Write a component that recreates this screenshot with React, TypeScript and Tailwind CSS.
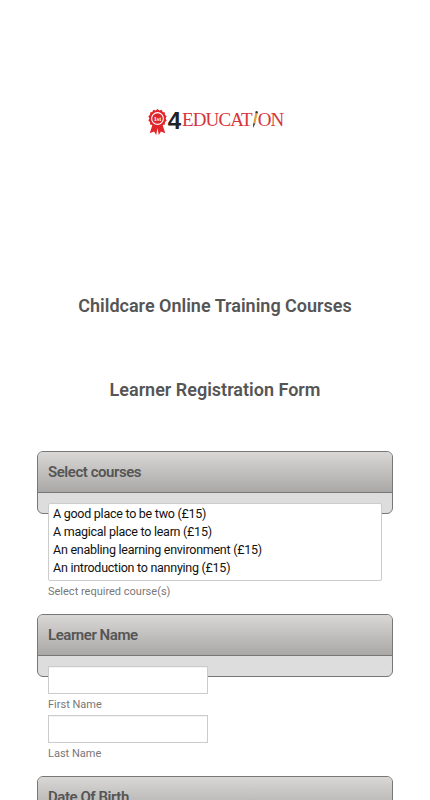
import React from 'react';

const COURSES = [
	'A good place to be two (£15)',
	'A magical place to learn (£15)',
	'An enabling learning environment (£15)',
	'An introduction to nannying (£15)',
];

// Rosette with ribbon tails
const Medal = () => (
	<svg width="19" height="26" viewBox="0 0 22 30" preserveAspectRatio="none" className="shrink-0">
		<path d="M6 16 L2 28 L7 26 L9.5 30 L11 22 L12.5 30 L15 26 L20 28 L16 16 Z" fill="#e0262b" />
		<path
			d="M11 0 L13.2 1.6 L15.8 1 L17 3.4 L19.6 4 L19.6 6.7 L21.6 8.5 L20.4 11 L21.6 13.4 L19.6 15.2 L19.6 17.9 L17 18.5 L15.8 20.9 L13.2 20.3 L11 21.9 L8.8 20.3 L6.2 20.9 L5 18.5 L2.4 17.9 L2.4 15.2 L0.4 13.4 L1.6 11 L0.4 8.5 L2.4 6.7 L2.4 4 L5 3.4 L6.2 1 L8.8 1.6 Z"
			fill="#e0262b"
		/>
		<circle cx="11" cy="11" r="6.8" fill="#e0262b" stroke="#ffffff" strokeWidth="1.3" />
		<text x="11" y="13.5" textAnchor="middle" fontSize="7" fontFamily="Liberation Serif, serif" fontWeight="700" fill="#ffffff">
			1st
		</text>
	</svg>
);

const Pencil = () => (
	<svg width="6" height="17" viewBox="0 0 6 17" className="shrink-0">
		<path d="M3.6 0.5 L5.8 1 L3.4 12.6 L1.2 12.2 Z" fill="#d9a441" />
		<path d="M3.8 0 L5.9 0.4 L5.5 2.4 L3.4 2 Z" fill="#333333" />
		<path d="M1.2 12.2 L3.4 12.6 L1 17 Z" fill="#3a3a3a" />
	</svg>
);

const Logo = () => (
	<div className="flex items-start justify-center h-[26px] pl-[1px]">
		<Medal />
		<span className="font-['Liberation_Sans',sans-serif] font-bold text-[24px] leading-[17px] mt-[3px] text-[#222222] ml-[1px]">4</span>
		<span className="font-['Liberation_Serif',serif] text-[19px] tracking-[-0.9px] leading-[17px] mt-[2px] ml-[1px] text-[#d8343a] flex items-center">
			EDUCAT
			<Pencil />
			ON
		</span>
	</div>
);

const Panel = ({ title, children }: { title: string; children: React.ReactNode }) => (
	<div>
		<div className="h-[63px] rounded-[6px] border border-[#777777] bg-[#dddddd] overflow-hidden">
			<div className="h-[41px] px-[10px] pt-[1px] flex items-center border-b border-[#777777] bg-gradient-to-b from-[#d9d8d6] to-[#a9a8a6]">
				<span className="text-[15px] tracking-[-0.45px] font-semibold text-[#555555]">{title}</span>
			</div>
		</div>
		<div className="-mt-[11px] px-[11px]">{children}</div>
	</div>
);

const Hint = ({ children }: { children: React.ReactNode }) => (
	<div className="text-[11px] leading-[14px] text-[#777777]">{children}</div>
);

const TextBox = () => (
	<div className="w-[160px] h-[28px] bg-white border border-[#cccccc] shadow-[inset_0_1px_1px_rgba(0,0,0,0.05)]" />
);

export default function App() {
	return (
		<div className="w-[430px] h-[800px] overflow-hidden bg-white font-['Roboto',sans-serif]">
			<div className="pt-[109px]">
				<Logo />
			</div>
			<h1 className="mt-[157px] text-center text-[18px] leading-[28px] font-semibold text-[#555555]">
				Childcare Online Training Courses
			</h1>
			<h2 className="mt-[56px] text-center text-[18px] leading-[28px] font-semibold text-[#555555]">
				Learner Registration Form
			</h2>
			<div className="mt-[47px] px-[37px]">
				<Panel title="Select courses">
					<div className="w-[334px] h-[78px] bg-white border border-[#cccccc] rounded-[2px] px-[4px] pt-[1px]">
						{COURSES.map(c => (
							<div key={c} className="text-[12.5px] tracking-[-0.26px] leading-[18px] text-[#111111]">
								{c}
							</div>
						))}
					</div>
					<div className="mt-[4px]">
						<Hint>Select required course(s)</Hint>
					</div>
				</Panel>
				<div className="mt-[15px]">
					<Panel title="Learner Name">
						<TextBox />
						<div className="mt-[4px]">
							<Hint>First Name</Hint>
						</div>
						<div className="mt-[3px]">
							<TextBox />
						</div>
						<div className="mt-[4px]">
							<Hint>Last Name</Hint>
						</div>
					</Panel>
				</div>
				<div className="mt-[15px]">
					<Panel title="Date Of Birth">
						<div />
					</Panel>
				</div>
			</div>
		</div>
	);
}
